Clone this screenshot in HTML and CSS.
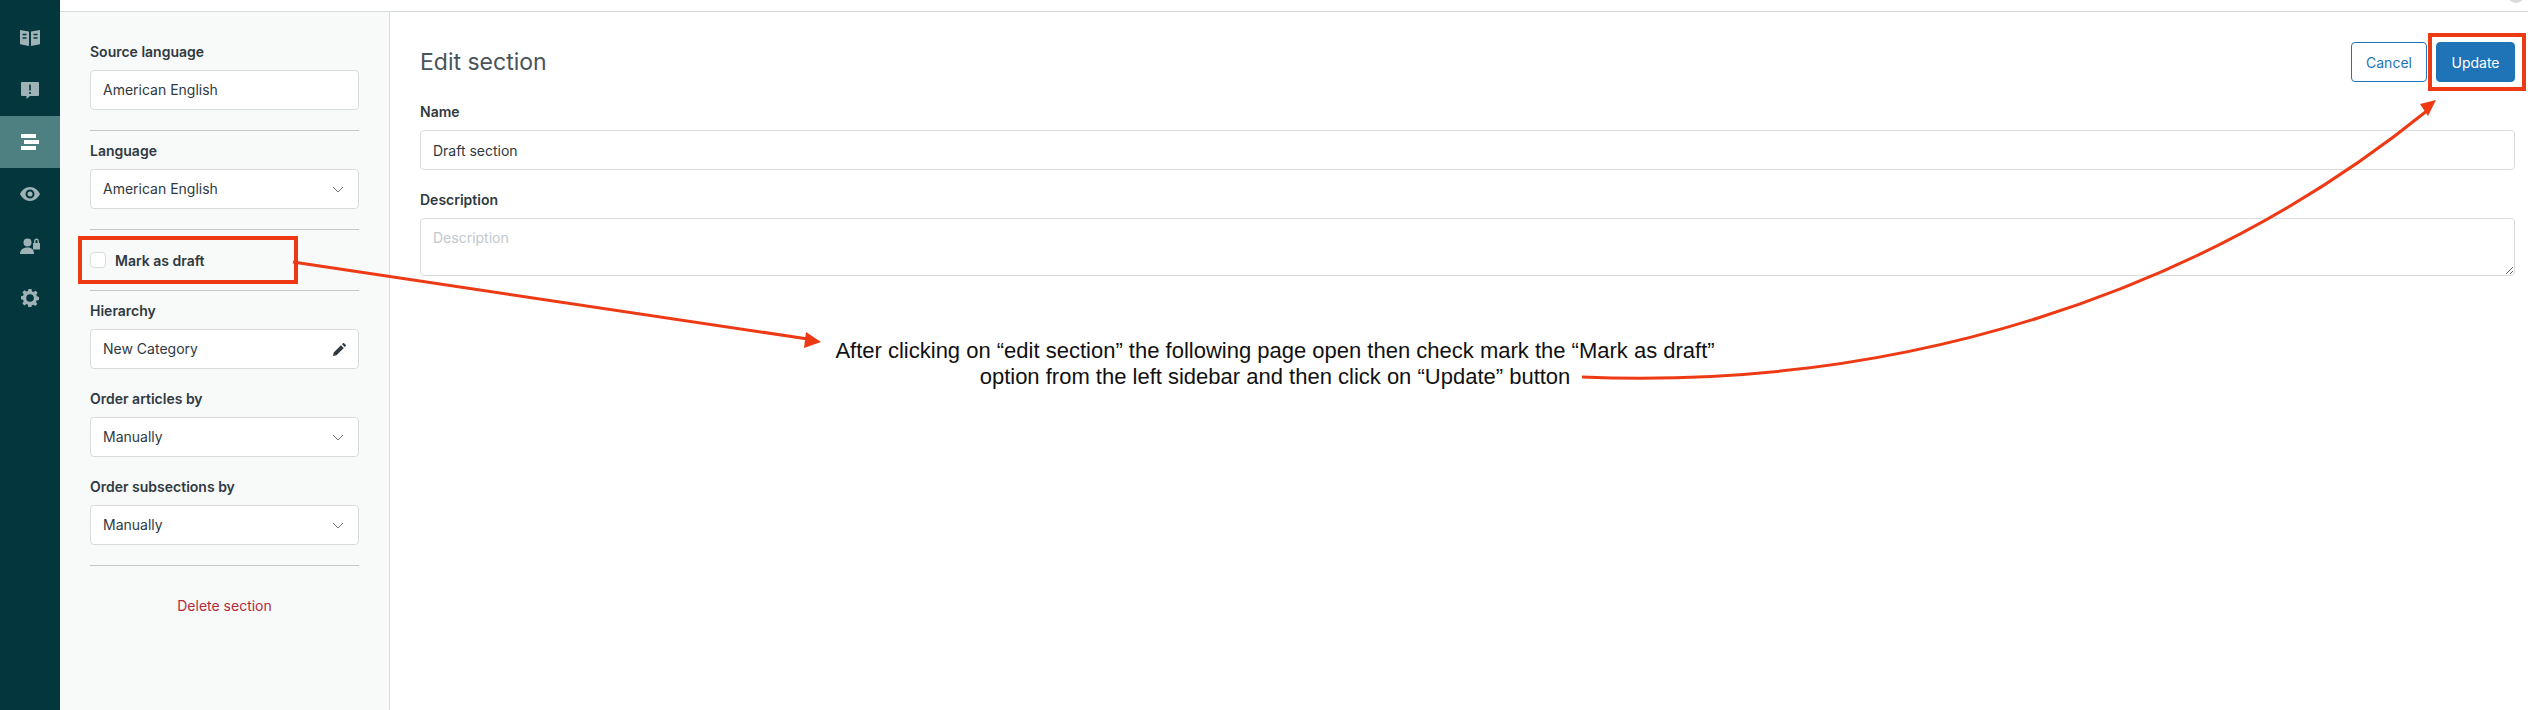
FILE: index.html
```html
<!DOCTYPE html>
<html lang="en">
<head>
    <meta charset="UTF-8">
    <meta name="viewport" content="width=device-width, initial-scale=1.0">
    <title>Edit section</title>
    <link rel="stylesheet" href="styles.css">
</head>
<body>
    <nav class="rail">
        <a class="rail-item">
            <svg viewBox="0 0 20 16" width="20" height="16"><path d="M0 0l9 1.500V16L0 14.200zM11 1.500L20 0v14.200L11 16z"/><path class="cut" d="M2.500 4.500h4M2.500 8h4M13.500 4.500h4M13.500 8h4" /></svg>
        </a>
        <a class="rail-item">
            <svg viewBox="0 0 18 17" width="18" height="17"><path d="M1 0h16a1 1 0 0 1 1 1v12a1 1 0 0 1-1 1H9l-3.500 3v-3H1a1 1 0 0 1-1-1V1a1 1 0 0 1 1-1z"/><path class="cut" d="M9 2.500v6M9 10v2"/></svg>
        </a>
        <a class="rail-item active">
            <svg viewBox="0 0 18 16" width="18" height="16"><path d="M0 0h15v4H0zM3 6h15v4H3zM0 12h15v4H0z"/></svg>
        </a>
        <a class="rail-item">
            <svg viewBox="0 0 20 14" width="20" height="14"><path fill-rule="evenodd" d="M10 0c4.500 0 8 3 10 7-2 4-5.500 7-10 7S2 11 0 7c2-4 5.500-7 10-7zm0 2.500a4.500 4.500 0 1 0 0 9 4.500 4.500 0 0 0 0-9zm0 2a2.500 2.500 0 1 1 0 5 2.500 2.500 0 0 1 0-5z"/></svg>
        </a>
        <a class="rail-item">
            <svg viewBox="0 0 20 16" width="20" height="16"><circle cx="7.500" cy="4.500" r="4"/><path d="M0 16c0-4 3-6.500 7.500-6.500S14 12 14 16z"/><path d="M13 5h7v6.500h-7z"/><path class="lock" d="M14.800 5V3a1.700 1.700 0 0 1 3.400 0v2"/></svg>
        </a>
        <a class="rail-item">
            <svg viewBox="0 0 18 18" width="18" height="18"><path fill-rule="evenodd" d="M7.500 0h3l.5 2.400 1.500.6 2.100-1.300 2 2-1.300 2.100.6 1.500 2.100.7v3l-2.400.5-.6 1.500 1.300 2.100-2 2-2.100-1.300-1.500.6-.5 2.100h-3L7 15.700l-1.500-.6-2.100 1.300-2-2 1.300-2.100-.6-1.500L0 10.300v-3l2.100-.5.6-1.500L1.400 3.200l2-2 2.100 1.300L7 1.900zM9 5.200a3.800 3.800 0 1 0 0 7.600 3.800 3.800 0 0 0 0-7.600z"/></svg>
        </a>
    </nav>

    <div class="page">
        <header class="topbar"><span class="avatar"></span></header>
        <div class="content">
            <aside class="panel">
                <label class="field-label">Source language</label>
                <div class="box">American English</div>
                <hr class="rule">

                <label class="field-label">Language</label>
                <div class="box">American English
                    <svg class="chevron" viewBox="0 0 12 7" width="12" height="7"><path d="M1 1l5 5 5-5"/></svg>
                </div>
                <hr class="rule">

                <div class="draft-row">
                    <span class="checkbox"></span>
                    <span class="draft-label">Mark as draft</span>
                </div>
                <hr class="rule rule-draft">

                <label class="field-label">Hierarchy</label>
                <div class="box">New Category
                    <svg class="pencil" viewBox="0 0 13 13" width="13" height="13"><path d="M0 13l.7-3.500L8 2.200 10.800 5 3.500 12.300zM9 1.200L10 .2a.8.8 0 0 1 1.100 0l1.700 1.700a.8.8 0 0 1 0 1.100l-1 1z"/></svg>
                </div>

                <label class="field-label spaced">Order articles by</label>
                <div class="box">Manually
                    <svg class="chevron" viewBox="0 0 12 7" width="12" height="7"><path d="M1 1l5 5 5-5"/></svg>
                </div>

                <label class="field-label spaced">Order subsections by</label>
                <div class="box">Manually
                    <svg class="chevron" viewBox="0 0 12 7" width="12" height="7"><path d="M1 1l5 5 5-5"/></svg>
                </div>
                <hr class="rule">

                <a class="delete-link">Delete section</a>
            </aside>

            <main class="editor">
                <div class="editor-head">
                    <h1>Edit section</h1>
                    <div class="actions">
                        <button class="btn btn-cancel">Cancel</button>
                        <button class="btn btn-update">Update</button>
                    </div>
                </div>
                <label class="field-label">Name</label>
                <input class="text-input" type="text" value="Draft section">
                <label class="field-label spaced">Description</label>
                <textarea class="text-area" placeholder="Description"></textarea>
            </main>
        </div>
    </div>

    <!-- annotations drawn on top of the screenshot -->
    <div class="mark mark-draft"></div>
    <div class="mark mark-update"></div>
    <svg class="arrows" width="2528" height="710" viewBox="0 0 2528 710">
        <path d="M293 262L808 339"/>
        <path class="head" d="M821 342L804 348L806 332z"/>
        <path d="M1582 377C1900 390 2200 295 2428 110"/>
        <path class="head" d="M2436 100L2428 116L2420 104z"/>
    </svg>
    <p class="note">After clicking on “edit section” the following page open then check mark the “Mark as draft”<br>option from the left sidebar and then click on “Update” button</p>
</body>
</html>
```

FILE: styles.css
```css
body {
    margin: 0;
    height: 710px;
    overflow: hidden;
    display: flex;
    background: #fff;
    color: #2f3941;
    font-family: Inter, "Noto Sans", sans-serif;
    font-size: 14px;
}
.rail {
    width: 60px;
    flex-shrink: 0;
    background: #03363d;
    padding-top: 12px;
}
.rail-item {
    height: 52px;
    display: flex;
    align-items: center;
    justify-content: center;
}
.rail-item svg {
    fill: #9fb3b6;
}
.rail-item .cut {
    fill: none;
    stroke: #03363d;
    stroke-width: 1.6;
}
.rail-item .lock {
    fill: none;
    stroke: #9fb3b6;
    stroke-width: 1.4;
}
.rail-item.active {
    background: #4f8081;
}
.rail-item.active svg {
    fill: #fff;
}
.page {
    flex: 1;
    display: flex;
    flex-direction: column;
    min-width: 0;
}
.topbar {
    height: 11px;
    border-bottom: 1px solid #d8dcde;
    display: flex;
    justify-content: flex-end;
    overflow: hidden;
}
.avatar {
    width: 18px;
    height: 18px;
    margin: -15px 3px 0 0;
    border-radius: 50%;
    background: #d8dcde;
}
.content {
    flex: 1;
    display: flex;
}
.panel {
    width: 269px;
    padding: 30px 30px 0;
    background: #f8f9f9;
    border-right: 1px solid #d8dcde;
    flex-shrink: 0;
}
.field-label {
    display: block;
    height: 20px;
    line-height: 20px;
    margin-bottom: 8px;
    font-size: 14px;
    font-weight: 600;
}
.field-label.spaced {
    margin-top: 20px;
}
.box {
    height: 38px;
    box-sizing: content-box;
    padding: 0 12px;
    display: flex;
    align-items: center;
    justify-content: space-between;
    background: #fff;
    border: 1px solid #d8dcde;
    border-radius: 4px;
    line-height: 38px;
}
.chevron {
    fill: none;
    stroke: #68737d;
    stroke-width: 1;
    margin-right: 2px;
}
.pencil {
    fill: #2f3941;
}
.rule {
    margin: 20px 0 10px;
    border: 0;
    border-top: 1px solid #c2c8cc;
}
.rule-draft {
    margin-top: 10px;
}
.draft-row {
    height: 40px;
    display: flex;
    align-items: center;
    gap: 9px;
}
.checkbox {
    width: 14px;
    height: 14px;
    background: #fff;
    border: 1px solid #d8dcde;
    border-radius: 4px;
}
.draft-label {
    font-weight: 600;
}
.delete-link {
    display: block;
    margin-top: 30px;
    line-height: 20px;
    text-align: center;
    color: #b52a3a;
}
.editor {
    flex: 1;
    min-width: 0;
    padding: 30px 13px 0 30px;
}
.editor-head {
    display: flex;
    justify-content: space-between;
    align-items: center;
    height: 40px;
    margin-bottom: 20px;
}
h1 {
    margin: 0;
    font-size: 23px;
    font-weight: 400;
    color: #49545c;
}
.actions {
    display: flex;
    gap: 9px;
}
.btn {
    height: 40px;
    border-radius: 4px;
    font-family: inherit;
    font-size: 14px;
}
.btn-cancel {
    width: 76px;
    background: #fff;
    border: 1px solid #1f73b7;
    color: #1f73b7;
}
.btn-update {
    width: 79px;
    background: #1f73b7;
    border: 1px solid #1f73b7;
    color: #fff;
}
.text-input, .text-area {
    display: block;
    width: 100%;
    box-sizing: border-box;
    padding: 0 12px;
    border: 1px solid #d8dcde;
    border-radius: 4px;
    font-family: inherit;
    font-size: 14px;
    color: #2f3941;
}
.text-input {
    height: 40px;
}
.text-area {
    height: 58px;
    padding-top: 10px;
}
.text-area::placeholder {
    color: #c2c8cc;
}
.mark {
    position: absolute;
    box-sizing: border-box;
    border: 4px solid #ee3a14;
}
.mark-draft {
    left: 78px;
    top: 236px;
    width: 220px;
    height: 48px;
}
.mark-update {
    left: 2428px;
    top: 33px;
    width: 98px;
    height: 58px;
}
.arrows {
    position: absolute;
    left: 0;
    top: 0;
    pointer-events: none;
}
.arrows path {
    fill: none;
    stroke: #ee3a14;
    stroke-width: 3;
}
.arrows .head {
    fill: #ee3a14;
    stroke: none;
}
.note {
    position: absolute;
    left: 775px;
    top: 338px;
    width: 1000px;
    margin: 0;
    text-align: center;
    font-family: "Liberation Sans", Arial, sans-serif;
    font-size: 22px;
    line-height: 26px;
    color: #111;
}
```
